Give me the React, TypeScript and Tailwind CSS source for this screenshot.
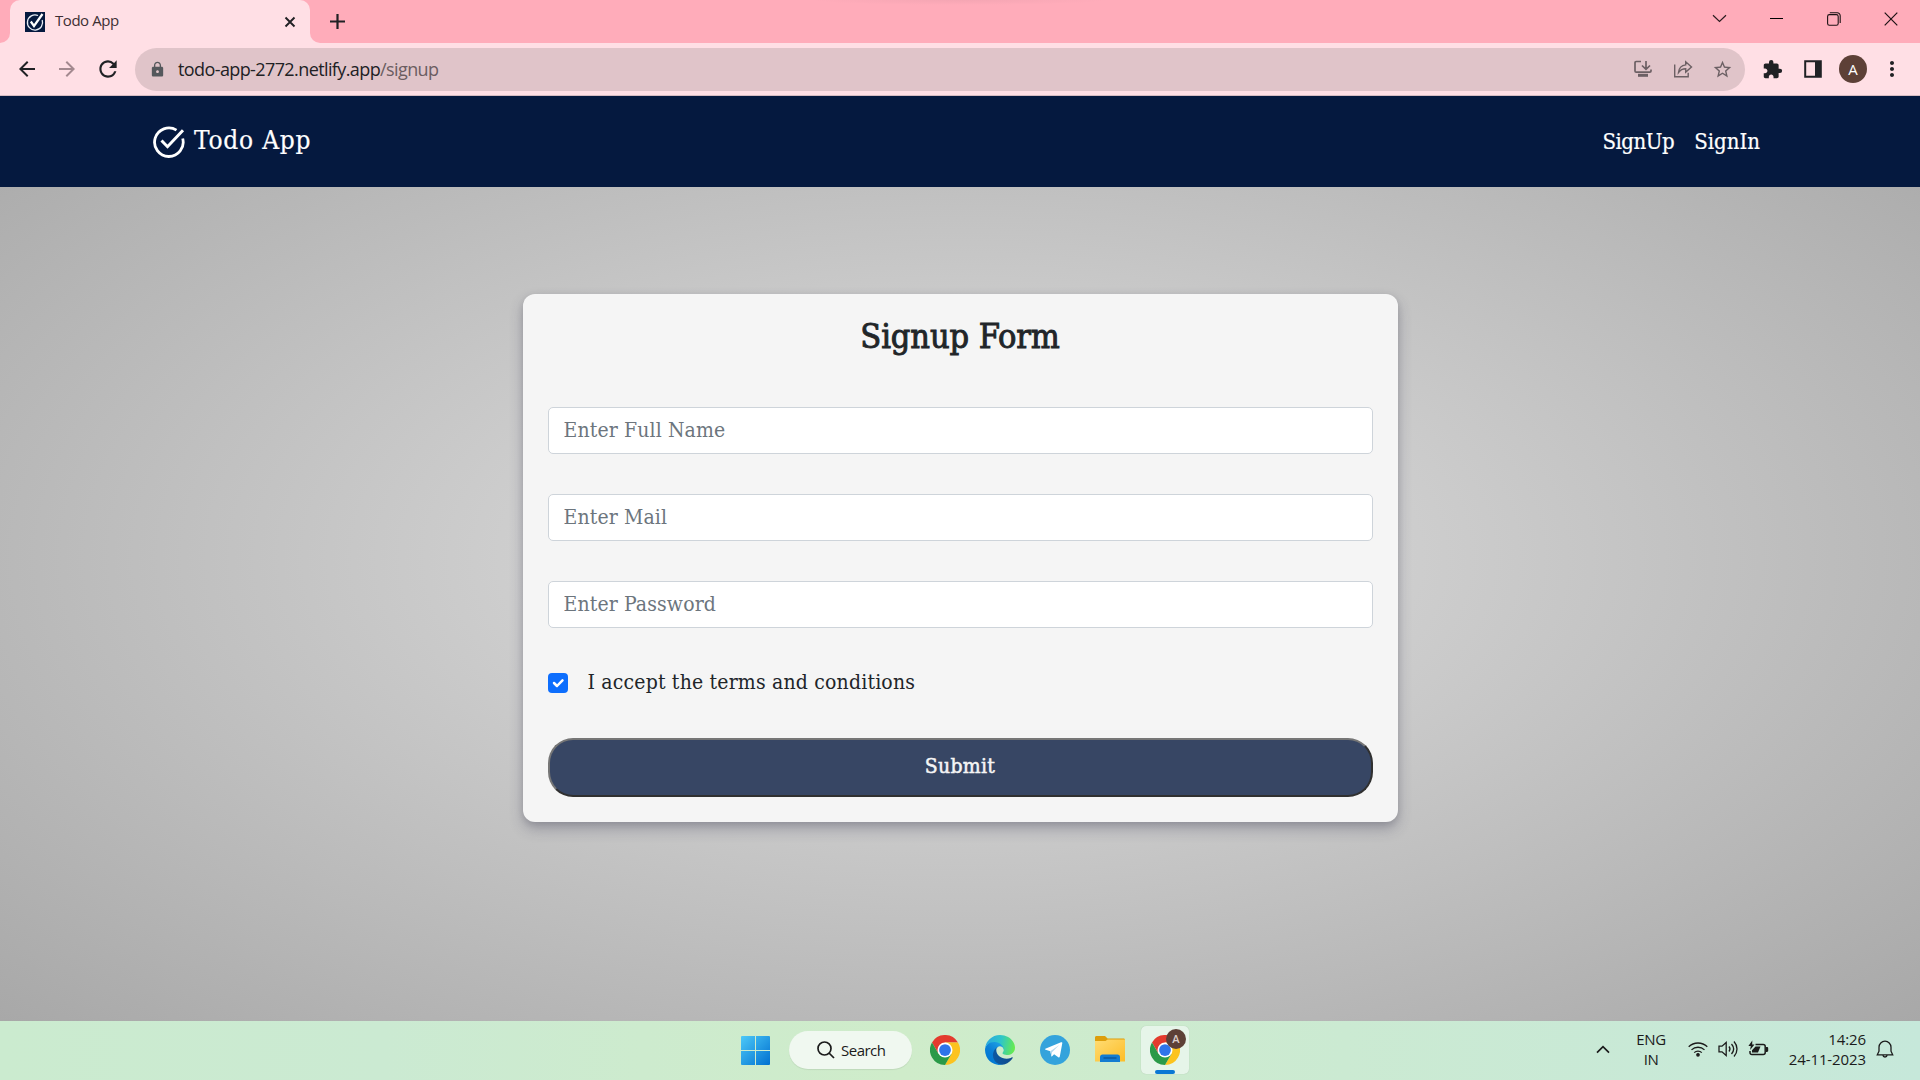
import React from "react";
import { MdArrowBack, MdArrowForward, MdRefresh, MdLock, MdExtension, MdMoreVert, MdStarBorder } from "react-icons/md";

const Chrome = () => (
  <svg width="30" height="30" viewBox="0 0 48 48">
    <path d="M24 12 H44.8 A24 24 0 0 0 3.2 12 L13.6 30 Z" fill="#e33b2e" />
    <path d="M34.4 30 L24 48 A24 24 0 0 0 44.8 12 H24 Z" fill="#fcc31e" />
    <path d="M13.6 30 L3.2 12 A24 24 0 0 0 24 48 L34.4 30 Z" fill="#2a9a48" />
    <circle cx="24" cy="24" r="12" fill="#fff" />
    <circle cx="24" cy="24" r="9.4" fill="#2f74ea" />
  </svg>
);

const Edge = () => (
  <svg width="30" height="30" viewBox="0 0 256 256">
    <defs>
      <linearGradient id="eA" x1="60" y1="177" x2="240" y2="177" gradientUnits="userSpaceOnUse"><stop stopColor="#0c59a4" /><stop offset="1" stopColor="#114a8b" /></linearGradient>
      <linearGradient id="eB" x1="150" y1="100" x2="40" y2="230" gradientUnits="userSpaceOnUse"><stop stopColor="#1b9de2" /><stop offset="0.5" stopColor="#0b7fd6" /><stop offset="1" stopColor="#0078d4" /></linearGradient>
      <linearGradient id="eC" x1="10" y1="60" x2="250" y2="110" gradientUnits="userSpaceOnUse"><stop stopColor="#2aa9e0" /><stop offset="0.5" stopColor="#2fc6c8" /><stop offset="1" stopColor="#66eb4e" /></linearGradient>
    </defs>
    <path fill="url(#eA)" d="M231 190.500c-3.400 1.800-6.900 3.400-10.500 4.700a101.900 101.900 0 0 1-35.900 6.500c-47.300 0-88.500-32.500-88.500-74.300 0-11.400 6.400-21.900 16.500-27.300-42.800 1.800-53.800 46.400-53.800 72.500 0 73.900 68.100 81.400 82.800 81.400 7.900 0 19.800-2.300 27-4.600l1.300-.4a128.300 128.300 0 0 0 66.600-52.800 4 4 0 0 0-5.500-5.700z" />
    <path fill="url(#eB)" d="M105.700 241.400a79.200 79.200 0 0 1-22.700-21.300 80.700 80.700 0 0 1 29.500-120c3.200-1.500 8.500-4.100 15.600-4a32.400 32.400 0 0 1 25.700 13 31.900 31.900 0 0 1 6.300 18.700c0-.2 24.500-79.600-80-79.600-43.900 0-80 41.700-80 78.200a130.200 130.200 0 0 0 12.100 56 128 128 0 0 0 156.400 67 75.500 75.500 0 0 1-62.800-8z" />
    <path fill="url(#eC)" d="M152.300 148.900c-.8 1-3.300 2.500-3.300 5.700 0 2.600 1.700 5.100 4.700 7.200 14.400 10 41.500 8.700 41.600 8.700a59.600 59.600 0 0 0 30.300-8.300 61.400 61.400 0 0 0 30.400-52.900c.3-22.400-8-37.300-11.300-43.900C223.500 23.900 177.700 0 128 0A128 128 0 0 0 0 126.200c.5-36.500 36.800-66 80-66 3.500 0 23.500.3 42 10 16.300 8.600 24.900 19 30.800 29.200 6.200 10.700 7.300 24.100 7.300 29.500 0 5.300-2.700 13.300-7.800 20z" />
  </svg>
);

const Telegram = () => (
  <svg width="30" height="30" viewBox="0 0 30 30">
    <circle cx="15" cy="15" r="15" fill="#34a3dc" />
    <path d="M22.300 8.200 19.800 21.600c-.2.900-.8 1.100-1.500.7l-4.200-3.100-2 2c-.5.500-.7.400-.8-.3l-1-4.600-4.600-1.500c-.9-.3-.9-.9.200-1.300L21 7.300c.8-.3 1.500.1 1.300.9z" fill="#fff" />
    <path d="m10.300 16.300 9-6.300-7.300 7.200-.4 4z" fill="#b5d9ee" />
  </svg>
);

const Folder = () => (
  <svg width="30" height="28" viewBox="0 0 30 28">
    <defs><linearGradient id="fo" x1="0" y1="0" x2="1" y2="1"><stop stopColor="#ffdc74" /><stop offset="1" stopColor="#fdbd27" /></linearGradient></defs>
    <path d="M0 2.500C0 1.600.6 1 1.500 1H10l2.600 2.600H28.500c.9 0 1.500.6 1.500 1.500V10H0z" fill="#dd9e0b" />
    <path d="M0 6h10.500l2.200-1.500H30V26.500H0z" fill="url(#fo)" />
    <path d="M5 27v-5c0-1.500 1-2.500 2.500-2.500h15c1.500 0 2.500 1 2.500 2.500v5z" fill="#147cd1" />
    <path d="M8.500 23h13" stroke="#0b4f93" strokeWidth="1.200" />
  </svg>
);

const Field = ({ placeholder }: { placeholder: string }) => (
  <input
    placeholder={placeholder}
    className="block h-[47px] w-full rounded-[5px] border border-[#ced4da] bg-white px-[15px] pb-[2px] text-[21px] tracking-[0.12px] text-[#212529] placeholder:text-[#6c757d] placeholder:opacity-100"
  />
);

export default function App() {
  return (
    <div className="flex h-[1080px] w-[1920px] flex-col overflow-hidden [font-family:'Open_Sans','Noto_Sans',sans-serif]">
      <div className="relative flex h-[43px] bg-[#ffacba]">
        <div className="absolute left-[810px] top-0 h-[5px] w-[300px] bg-[radial-gradient(ellipse_at_50%_0%,rgba(150,110,120,0.1),transparent_70%)]" />
        <div className="flex h-[43px] w-[10px] items-end bg-[#ffdfe5]"><div className="h-[43px] w-[10px] rounded-br-[10px] bg-[#ffacba]" /></div>
        <div className="bg-[#ffacba]">
          <div className="flex h-[43px] w-[300px] items-center rounded-t-[10px] bg-[#ffdfe5] pl-[15px] pr-[13px]">
            <svg width="20" height="20" viewBox="0 0 20 20" className="shrink-0">
              <rect width="20" height="20" fill="#05193f" />
              <path d="M13 3.500A7.600 7.600 0 1 0 17.200 8" fill="none" stroke="#e8edf5" strokeWidth="1.300" />
              <path d="M5.800 9.500 9 14 17.500 2" fill="none" stroke="#fff" strokeWidth="2.200" />
            </svg>
            <span className="ml-[10px] mt-[-2px] text-[15px] tracking-[-0.45px] text-[#3d2f33]">Todo App</span>
            <svg className="ml-auto" width="14" height="14" viewBox="0 0 14 14"><path d="m2.500 2.500 9 9m0-9-9 9" stroke="#202124" strokeWidth="1.900" /></svg>
          </div>
        </div>
        <div className="h-[43px] w-[10px] bg-[#ffdfe5]"><div className="h-[43px] w-[10px] rounded-bl-[10px] bg-[#ffacba]" /></div>
        <svg className="ml-[9px] mt-[13px]" width="17" height="17" viewBox="0 0 17 17"><path d="M8.500 1v15M1 8.500h15" stroke="#202124" strokeWidth="2.200" /></svg>
        <div className="ml-auto flex h-[37px] items-center pr-[22px]">
          <svg width="15" height="9" viewBox="0 0 15 9"><path d="m1 1.200 6.500 6.300L14 1.200" fill="none" stroke="#2b1c1f" strokeWidth="1.200" /></svg>
          <div className="ml-[43px] h-px w-[13px] bg-black" />
          <svg className="ml-[44px]" width="14" height="14" viewBox="0 0 14 14" fill="none" stroke="#1c1214" strokeWidth="1.100"><rect x=".6" y="2.600" width="10.600" height="10.600" rx="1.800" /><path d="M2.800.7h7.400a3 3 0 0 1 3 3v7.200" /></svg>
          <svg className="ml-[43px]" width="14" height="14" viewBox="0 0 14 14"><path d="m.7.7 12.600 12.600m0-12.600L.7 13.300" stroke="#1c1214" strokeWidth="1.200" /></svg>
        </div>
      </div>

      <div className="flex h-[53px] items-center border-b border-[#d6bcc2] bg-[#ffdfe5] pl-[15px] pr-[16px]">
        <MdArrowBack size={24} color="#202124" />
        <MdArrowForward className="ml-[16px]" size={24} color="#a3898f" />
        <MdRefresh className="ml-[16px]" size={26} color="#202124" />
        <div className="ml-[14px] flex h-[43px] w-[1610px] items-center rounded-full bg-[#e0c4c9] pl-[14px] pr-[12px]">
          <MdLock size={17} color="#55585c" />
          <span className="ml-[12px] mt-px text-[18px] tracking-[-0.6px] text-[#202124]">todo-app-2772.netlify.app<span className="text-[#6b5d61]">/signup</span></span>
          <svg className="ml-auto" width="20" height="20" viewBox="0 0 20 20" fill="none" stroke="#6c6064" strokeWidth="1.700"><path d="M8 2.500H3.200c-.9 0-1.200.4-1.200 1.200V12c0 .8.400 1.200 1.200 1.200h13.600c.8 0 1.200-.4 1.200-1.200v-1.500M13 2v7.500M9 6.500l4 3.800 4-3.800" /><path d="M5 16.300h10" strokeWidth="3" /></svg>
          <svg className="ml-[20px]" width="20" height="20" viewBox="0 0 20 20" fill="none" stroke="#6c6064" strokeWidth="1.400"><path d="M1.700 5.500v12.300h13.500v-4" /><path d="M5.500 13.500C6 8.800 8.500 6.300 12.700 5.900V2.700l5.800 5.200-5.800 5.200V9.800C9.500 9.800 7.300 11 5.500 13.500z" /></svg>
          <MdStarBorder className="ml-[19px]" size={21} color="#6c6064" />
        </div>
        <MdExtension className="ml-[17px]" size={21} color="#202124" />
        <svg className="ml-[21px]" width="18" height="18" viewBox="0 0 18 18"><path d="M1.200 1.200h15.600v15.600H1.200z" fill="none" stroke="#202124" strokeWidth="2" /><path d="M11 1h6v16h-6z" fill="#202124" /></svg>
        <div className="ml-[17px] flex size-[28px] items-center justify-center rounded-full bg-[#5d4037] text-[15px] text-white">A</div>
        <MdMoreVert className="ml-[13px]" size={24} color="#202124" />
      </div>

      <div className="flex min-h-0 flex-1 flex-col [font-family:'DejaVu_Serif_Condensed','DejaVu_Serif',serif] font-stretch-condensed">
        <nav className="flex h-[91px] shrink-0 items-center bg-[#05193f] pl-[153px] pr-[160px] text-white">
          <svg className="mt-[1px]" width="32" height="32" viewBox="0 0 32 32" fill="none" stroke="#fff" strokeWidth="2.800">
            <path d="M23.500 4.100A14.300 14.300 0 1 0 29.700 12.500" />
            <path d="M8.500 14.500 14.500 20.700 30 4.300" strokeWidth="3" />
          </svg>
          <span className="ml-[9px] mt-[-2px] text-[26px] tracking-[0.8px] [-webkit-text-stroke:0.2px_#ffffff]">Todo App</span>
          <span className="ml-auto text-[22px] tracking-[-0.5px] [-webkit-text-stroke:0.2px_#ffffff]">SignUp</span>
          <span className="ml-[20px] text-[22px] tracking-[0px] [-webkit-text-stroke:0.2px_#ffffff]">SignIn</span>
        </nav>
        <main className="flex flex-1 items-start justify-center bg-[radial-gradient(1358px_654px_at_960px_371px,#e0e0e0_0%,#a8a8a8_100%)] pt-[107px]">
          <form className="mt-0 h-[528px] w-[875px] rounded-[12px] bg-[#f5f5f5] px-[25px] text-[#212529] shadow-[0_7px_14px_rgba(50,50,80,0.3),0_2px_6px_rgba(0,0,0,0.1)]">
            <h1 className="flex h-[113px] items-start justify-center pt-[19px] text-[34px] leading-[46px] tracking-[-0.1px] [-webkit-text-stroke:0.9px_#212529]">Signup Form</h1>
            <div className="flex flex-col gap-[40px]">
              <Field placeholder="Enter Full Name" />
              <Field placeholder="Enter Mail" />
              <Field placeholder="Enter Password" />
            </div>
            <div className="mt-[45px] flex h-[20px] items-center">
              <svg width="20" height="20" viewBox="0 0 20 20"><rect width="20" height="20" rx="4" fill="#0d6efd" /><path d="m6 10 3 3 5.500-5.700" fill="none" stroke="#fff" strokeWidth="2.500" strokeLinecap="round" strokeLinejoin="round" /></svg>
              <span className="ml-[20px] mt-[-1px] text-[21px] tracking-[0.18px]">I accept the terms and conditions</span>
            </div>
            <button type="button" className="mt-[45px] flex h-[59px] w-full items-center justify-center rounded-[25px] border-2 border-t-[#767676] border-r-[#303030] border-b-[#303030] border-l-[#767676] bg-[#374664] pb-[1px] text-[21px] tracking-[0.3px] text-[#f5f5f5] [-webkit-text-stroke:0.5px_#f5f5f5]">Submit</button>
          </form>
        </main>
      </div>

      <div className="flex h-[59px] shrink-0 items-center bg-[linear-gradient(90deg,#cbebcf_0%,#cbead2_20%,#cfecca_47%,#cbead2_70%,#c6e8da_100%)] pl-[741px] pr-[26px] text-[15px] text-[#1b1b1b]">
        <svg width="29" height="29" viewBox="0 0 29 29">
          <defs><linearGradient id="wi" x1="0" y1="0" x2="29" y2="29" gradientUnits="userSpaceOnUse"><stop stopColor="#4cc9f8" /><stop offset="1" stopColor="#0070d0" /></linearGradient></defs>
          <path fill="url(#wi)" d="M1 0h13v14H0V1a1 1 0 0 1 1-1zM15 0h13a1 1 0 0 1 1 1v13H15zM0 15h14v14H1a1 1 0 0 1-1-1zM15 15h14v13a1 1 0 0 1-1 1H15z" />
        </svg>
        <div className="ml-[19px] mt-[-1px] flex h-[38px] w-[123px] items-center rounded-full bg-[#f0f8f0] pl-[28px] shadow-[0_1px_1px_rgba(0,0,0,0.08)]">
          <svg width="18" height="18" viewBox="0 0 18 18" fill="none" stroke="#1b1b1b" strokeWidth="1.700"><circle cx="7.500" cy="7.500" r="6.500" /><path d="m12 12 5 5" /></svg>
          <span className="ml-[6px] text-[15px] tracking-[-0.5px]">Search</span>
        </div>
        <div className="ml-[18px] mt-[-1px] flex gap-[25px]"><Chrome /><Edge /><Telegram /><Folder /></div>
        <div className="relative ml-[16px] mt-[-1px] flex size-[48px] items-center justify-center rounded-[5px] bg-[#e6f5e9] shadow-[0_0_1px_rgba(0,0,0,0.2)]">
          <Chrome />
          <div className="absolute right-[3px] top-[3px] flex size-[20px] items-center justify-center rounded-full bg-[#5d4037] text-[11px] font-semibold text-[#dccfcb]">A</div>
          <div className="absolute bottom-0 left-[14px] h-[4px] w-[20px] rounded-full bg-[#0a78d4]" />
        </div>
        <div className="ml-auto mt-[-3px] flex items-center">
          <svg width="14" height="9" viewBox="0 0 14 9"><path d="m1 7.700 6-6 6 6" fill="none" stroke="#1b1b1b" strokeWidth="1.700" /></svg>
          <div className="ml-[26px] w-[30px] text-center text-[15px] leading-[20px] tracking-[-0.4px]">ENG<br />IN</div>
          <svg className="ml-[22px]" width="20" height="16" viewBox="0 0 20 16" fill="none" stroke="#1b1b1b" strokeWidth="1.300"><path d="M.7 5.800a13.300 13.300 0 0 1 18.600 0M3.500 8.900a9.300 9.300 0 0 1 13 0M6.200 11.600a5.400 5.400 0 0 1 7.600 0" /><circle cx="10" cy="13.800" r="1.200" fill="#1b1b1b" /></svg>
          <svg className="ml-[10px]" width="20" height="18" viewBox="0 0 20 18" fill="none" stroke="#1b1b1b" strokeWidth="1.300"><path d="M1 6.200h3L8.200 2.500v13L4 11.800H1zM11 6.500c1.200 1.500 1.200 3.500 0 5M13.500 4c2.600 3 2.600 7 0 10M16 1.500c4 4.500 4 10.500 0 15" /></svg>
          <svg className="ml-[10px]" width="21" height="18" viewBox="0 0 21 18"><path d="M7.500 4.500h7.700c1.300 0 2 .7 2 2v6c0 1.300-.7 2-2 2H4c-1.300 0-2-.7-2-2V11" fill="none" stroke="#1b1b1b" strokeWidth="1.500" /><path d="M18 7h1c.7 0 1.200.5 1.200 1.200v2.600c0 .7-.5 1.200-1.200 1.200h-1zM7.500 6.500h5L10 12.500H4v-2.200zM4.300.5.400 6h2.400l-.7 4L6.500 4.600H4.200z" fill="#1b1b1b" /></svg>
          <div className="ml-[17px] w-[80px] text-right text-[15px] leading-[20px] tracking-[-0.1px] whitespace-nowrap">14:26<br />24-11-2023</div>
          <svg className="ml-[10px]" width="18" height="20" viewBox="0 0 18 20" fill="none" stroke="#1b1b1b" strokeWidth="1.300"><path d="M3 8.200a6 6 0 0 1 12 0v4l1.700 3.600H1.300L3 12.200zM6.800 16c.2 1.300 1 2 2.200 2s2-.7 2.200-2" /></svg>
        </div>
      </div>
    </div>
  );
}
